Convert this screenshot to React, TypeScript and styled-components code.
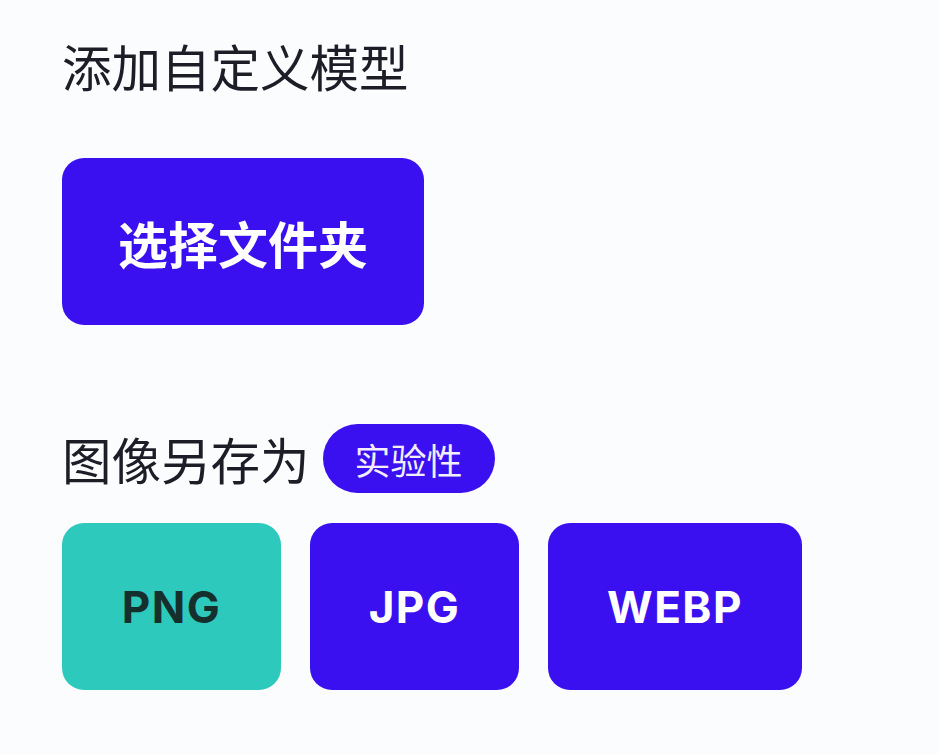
import styled, { createGlobalStyle } from 'styled-components'

const GlobalStyle = createGlobalStyle`
  html, body {
    margin: 0;
    background: #fbfcfe;
  }
  body {
    font-family: 'Noto Sans CJK SC', 'Noto Sans', sans-serif;
  }
`

const Page = styled.main`
  padding: 32px 0 0 62px;
  display: flex;
  flex-direction: column;
`

const SectionTitle = styled.h2<{ $gap?: number }>`
  margin: ${(p) => p.$gap ?? 0}px 0 0;
  display: flex;
  align-items: center;
  gap: 13px;
  font-size: 49.5px;
  font-weight: 400;
  line-height: 68px;
  color: #1d1d27;
`

const Badge = styled.span`
  display: inline-flex;
  align-items: center;
  justify-content: center;
  height: 69px;
  padding: 0 32px;
  border-radius: 35px;
  background: #3b10f0;
  color: #f2eeff;
  font-size: 36px;
  font-weight: 400;
`

const FolderButton = styled.button`
  margin-top: 58px;
  width: 362px;
  height: 167px;
  border: none;
  border-radius: 22px;
  background: #3b10f0;
  color: #fff;
  font-family: 'Noto Sans CJK SC', sans-serif;
  font-size: 50px;
  font-weight: 700;
  cursor: pointer;
`

const FormatRow = styled.div`
  margin-top: 30px;
  display: flex;
  gap: 29px;
`

const FormatButton = styled.button<{ $w: number; $active?: boolean }>`
  width: ${(p) => p.$w}px;
  height: 167px;
  border: none;
  border-radius: 22px;
  background: ${(p) => (p.$active ? '#2ec9bd' : '#3b10f0')};
  color: ${(p) => (p.$active ? '#15302c' : '#fff')};
  font-family: Inter, 'Open Sans', sans-serif;
  font-size: 44px;
  font-weight: 700;
  letter-spacing: 1.5px;
  cursor: pointer;
`

const formats = [
  { label: 'PNG', w: 219, active: true },
  { label: 'JPG', w: 209 },
  { label: 'WEBP', w: 254 },
]

export default function App() {
  return (
    <>
      <GlobalStyle />
      <Page>
        <SectionTitle>添加自定义模型</SectionTitle>
        <FolderButton>选择文件夹</FolderButton>
        <SectionTitle $gap={99}>
          图像另存为
          <Badge>实验性</Badge>
        </SectionTitle>
        <FormatRow>
          {formats.map((f) => (
            <FormatButton key={f.label} $w={f.w} $active={f.active}>
              {f.label}
            </FormatButton>
          ))}
        </FormatRow>
      </Page>
    </>
  )
}
